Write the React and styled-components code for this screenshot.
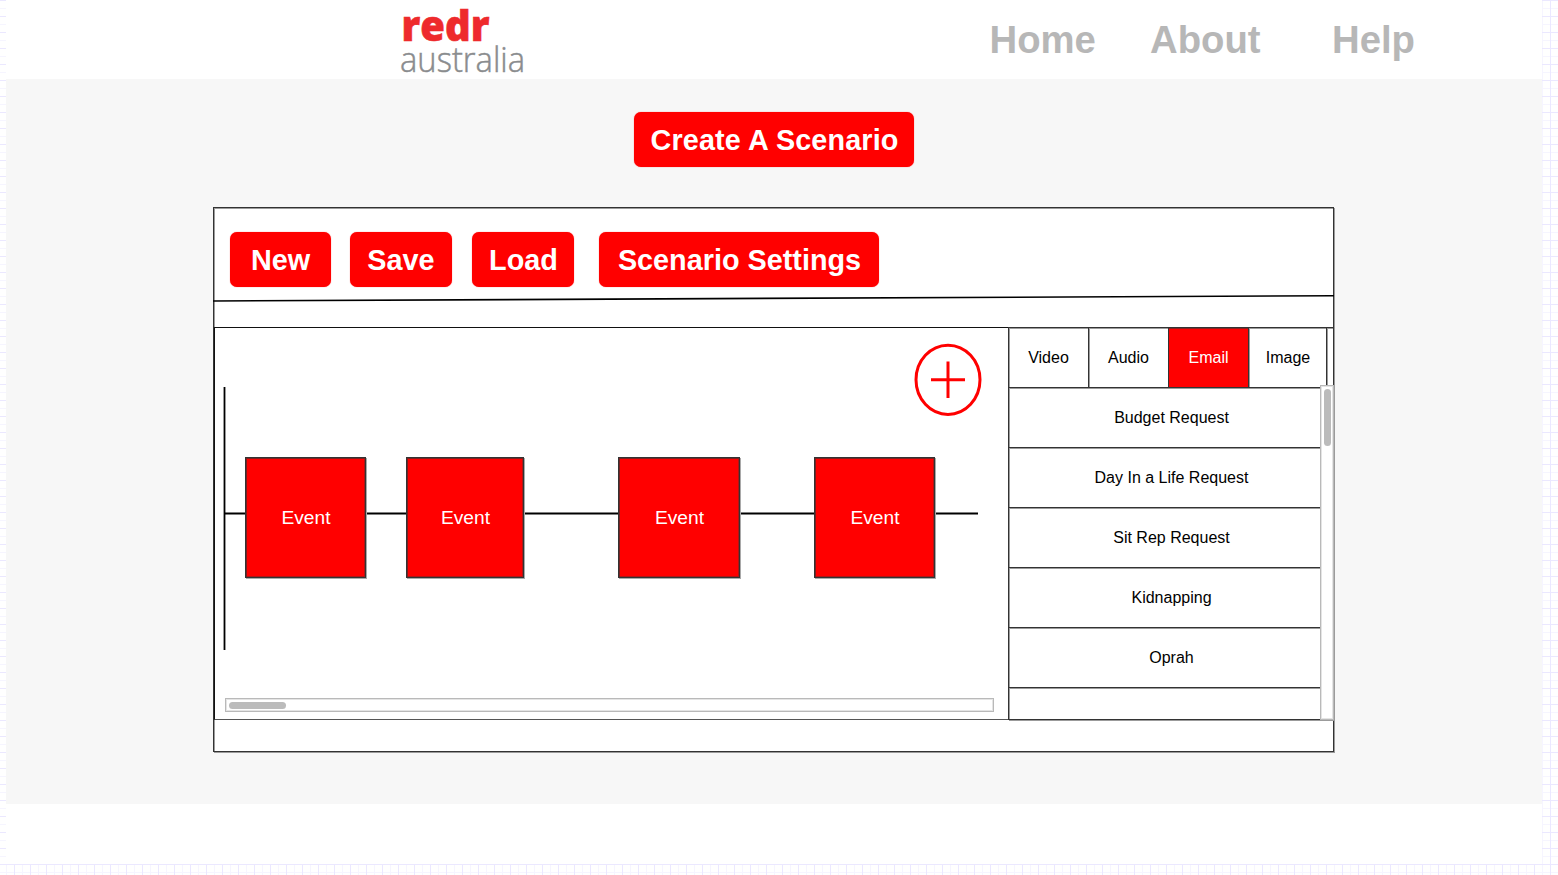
import React from 'react';
import styled, { createGlobalStyle, css } from 'styled-components';

const GlobalStyle = createGlobalStyle`
  * { box-sizing: border-box; }
  body { margin: 0; background: #fff; }
  #root { font-family: "Liberation Sans", Arial, sans-serif; }
`;

const ink = '#333';
const inkSoft = '#9b9b9b';
const red = '#ff0000';

const outline = css`
  border: 1px solid ${ink};
  box-shadow: 1px 1px 0 ${inkSoft}, inset 1px 1px 0 ${inkSoft};
`;

const Desk = styled.div`
  height: 875px;
  overflow: hidden;
  padding: 0 16px 0 6px;
  background-color: #fff;
  background-image:
    linear-gradient(#ebe8ff 1px, transparent 1px),
    linear-gradient(90deg, #ebe8ff 1px, transparent 1px),
    linear-gradient(#f6f5ff 1px, transparent 1px),
    linear-gradient(90deg, #f6f5ff 1px, transparent 1px);
  background-size: 16px 16px;
  background-position: 0 0, 14px 0, 0 8px, 6px 0;
`;

const Page = styled.div`
  height: 864px;
  background: #fff;
`;

const Header = styled.header`
  display: flex;
  height: 79px;
  padding-left: 392px;
`;

const Logo = styled.svg`
  display: block;
  width: 130px;
  height: 79px;
  overflow: visible;
  font-family: "Open Sans", sans-serif;
`;

const Nav = styled.nav`
  display: flex;
  padding: 18px 0 0 461.5px;
`;

const NavLink = styled.a`
  width: ${(p) => p.$width}px;
  color: #b7b7b7;
  font-size: 38.3px;
  font-weight: 700;
  line-height: 44px;
`;

const Main = styled.main`
  height: 725px;
  padding: 33px 0 0 207px;
  background: #f7f7f7;
`;

const Button = styled.button`
  display: block;
  flex: none;
  width: ${(p) => p.$width}px;
  height: 55px;
  margin: 0;
  padding: 1px 0 0 ${(p) => (p.$nudge ? 1 : 0)}px;
  border: 0;
  border-radius: 7px;
  background: ${red};
  box-shadow: 0 0 1px rgba(255, 0, 0, 0.7);
  color: #fff;
  font: 700 28.8px/54px "Liberation Sans", Arial, sans-serif;
  letter-spacing: ${(p) => p.$tracking || 0}px;
  text-align: center;
  white-space: nowrap;
`;

const TitleRow = styled.div`
  padding-left: 421px;
`;

const Editor = styled.section`
  ${outline}
  width: 1121px;
  height: 545px;
  margin-top: 40px;
  background: #fff;
`;

const Toolbar = styled.div`
  display: flex;
  height: 86px;
  padding: 24px 0 0 16px;
`;

const Gap = styled.div`
  flex: none;
  width: ${(p) => p.$width}px;
`;

const Divider = styled.svg`
  display: block;
  width: 1121px;
  height: 10px;
  margin-left: -1px;
`;

const Workspace = styled.div`
  display: flex;
  width: 1120px;
  height: 393px;
  margin-top: 23px;
`;

const Canvas = styled.div`
  position: relative;
  flex: none;
  width: 794px;
  height: 393px;
  border: solid #111;
  border-width: 1px 0 1px 1px;
  border-bottom-color: #555;
`;

const Timeline = styled.svg`
  display: block;
  width: 793px;
  height: 391px;
`;

const EventCard = styled.div`
  position: absolute;
  left: ${(p) => p.$x}px;
  top: 129px;
  width: ${(p) => p.$width}px;
  height: 121px;
  padding-left: 1px;
  border: 1px solid ${ink};
  box-shadow: 1px 1px 0 #a9a9a9, inset 1px 1px 0 #7a2020, inset -1px -1px 0 #b01515;
  background: ${red};
  color: #fff;
  font-size: 19.2px;
  line-height: 119px;
  text-align: center;
`;

const HorizontalTrack = styled.div`
  position: absolute;
  left: 10px;
  top: 370px;
  width: 769px;
  height: 14px;
  padding: 3px;
  border: 1px solid #b9b9b9;
  box-shadow: inset 0 0 0 1px #e4e4e4;
`;

const Thumb = styled.div`
  width: ${(p) => p.$width}px;
  height: ${(p) => p.$height}px;
  border-radius: 4px;
  background: #bbb;
`;

const Library = styled.aside`
  ${outline}
  position: relative;
  flex: none;
  width: 326px;
  height: 393px;
`;

const Tabs = styled.div`
  display: flex;
  height: 59px;
`;

const Tab = styled.div`
  flex: none;
  width: ${(p) => p.$width}px;
  height: 59px;
  padding-left: ${(p) => (p.$nudge ? 1 : 0)}px;
  border-right: 1px solid ${ink};
  box-shadow: 1px 0 0 ${inkSoft}, inset 0 1px 0 ${(p) => (p.$active ? '#8a2020' : inkSoft)};
  background: ${(p) => (p.$active ? red : 'transparent')};
  color: ${(p) => (p.$active ? '#fff' : '#000')};
  font-size: 16px;
  line-height: 59px;
  text-align: center;
`;

const ItemList = styled.div`
  width: 324px;
`;

const Item = styled.div`
  height: ${(p) => p.$height || 60}px;
  padding-left: 1px;
  border-top: 1px solid ${ink};
  box-shadow: inset 0 1px 0 ${inkSoft};
  color: #000;
  font-size: 16px;
  line-height: 59px;
  text-align: center;
`;

const VerticalTrack = styled.div`
  position: absolute;
  left: 311px;
  top: 57px;
  width: 14px;
  height: 335px;
  padding: 3px;
  border: 1px solid #b9b9b9;
  box-shadow: inset 0 0 0 1px #e4e4e4;
  background: #fff;
`;

const events = [
  { x: 30, width: 121 },
  { x: 191, width: 118 },
  { x: 403, width: 122 },
  { x: 599, width: 121 },
];

const tabs = [
  { label: 'Video', width: 80 },
  { label: 'Audio', width: 80 },
  { label: 'Email', width: 80, active: true },
  { label: 'Image', width: 78, nudge: true },
];

const items = ['Budget Request', 'Day In a Life Request', 'Sit Rep Request', 'Kidnapping', 'Oprah'];

export default function App() {
  return (
    <>
      <GlobalStyle />
      <Desk>
        <Page>
          <Header>
            <Logo viewBox="0 0 130 79">
              <text x="3.5" y="40.5" fontSize="42" fontWeight="800" fill="#ee2a2c" stroke="#ee2a2c" strokeWidth="0.6" textLength="88" lengthAdjust="spacingAndGlyphs">redr</text>
              <text x="2" y="71.5" fontSize="35.5" fontWeight="300" fill="#8a8c8e" stroke="#8a8c8e" strokeWidth="0.5" textLength="125" lengthAdjust="spacingAndGlyphs">australia</text>
            </Logo>
            <Nav>
              <NavLink $width={160.5}>Home</NavLink>
              <NavLink $width={182}>About</NavLink>
              <NavLink $width={90}>Help</NavLink>
            </Nav>
          </Header>
          <Main>
            <TitleRow>
              <Button $width={280} $tracking={0.12} $nudge>Create A Scenario</Button>
            </TitleRow>
            <Editor>
              <Toolbar>
                <Button $width={101}>New</Button>
                <Gap $width={19} />
                <Button $width={102}>Save</Button>
                <Gap $width={20} />
                <Button $width={102} $nudge>Load</Button>
                <Gap $width={25} />
                <Button $width={280} $nudge>Scenario Settings</Button>
              </Toolbar>
              <Divider viewBox="0 0 1121 10">
                <line x1="0" y1="7" x2="1121" y2="1.7" stroke="#000" strokeWidth="1.6" />
              </Divider>
              <Workspace>
                <Canvas>
                  <Timeline viewBox="0 0 793 391" fill="none">
                    <path d="M9.5 59V322M9.5 185.5H763" stroke="#000" strokeWidth="1.8" />
                    <ellipse cx="733" cy="51.8" rx="32" ry="34.6" stroke={red} strokeWidth="3" />
                    <path d="M716 51.8H750M733 33.5V70" stroke={red} strokeWidth="3" />
                  </Timeline>
                  {events.map((e) => (
                    <EventCard key={e.x} $x={e.x} $width={e.width}>Event</EventCard>
                  ))}
                  <HorizontalTrack>
                    <Thumb $width={57} $height={7} />
                  </HorizontalTrack>
                </Canvas>
                <Library>
                  <Tabs>
                    {tabs.map((t) => (
                      <Tab key={t.label} $width={t.width} $active={t.active} $nudge={t.nudge}>{t.label}</Tab>
                    ))}
                  </Tabs>
                  <ItemList>
                    {items.map((label) => (
                      <Item key={label}>{label}</Item>
                    ))}
                    <Item $height={32} />
                  </ItemList>
                  <VerticalTrack>
                    <Thumb $width={7} $height={57} />
                  </VerticalTrack>
                </Library>
              </Workspace>
            </Editor>
          </Main>
        </Page>
      </Desk>
    </>
  );
}
